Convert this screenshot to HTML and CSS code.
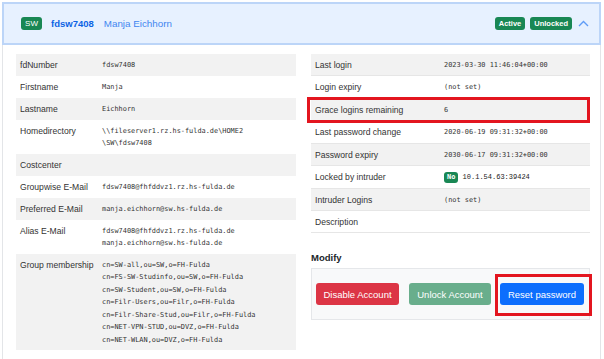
FILE: index.html
```html
<!DOCTYPE html>
<html lang="en">
<head>
    <meta charset="UTF-8">
    <title>Account fdsw7408</title>
    <link rel="stylesheet" href="styles.css">
</head>
<body>

    <div class="account">
        <!-- Accordion header -->
        <div class="account-head">
            <span class="badge badge-ou">SW</span>
            <span class="uid">fdsw7408</span>
            <span class="fullname">Manja Eichhorn</span>
            <span class="head-right">
                <span class="badge">Active</span>
                <span class="badge">Unlocked</span>
                <svg class="chevron" width="11" height="7" viewBox="0 0 11 7">
                    <path d="M1 6 L5.5 1.5 L10 6" fill="none" stroke="#5f9cf6" stroke-width="1.4"/>
                </svg>
            </span>
        </div>

        <!-- Accordion body -->
        <div class="account-body">
            <table class="info info-left">
                <tr><td class="key">fdNumber</td><td class="val">fdsw7408</td></tr>
                <tr><td class="key">Firstname</td><td class="val">Manja</td></tr>
                <tr><td class="key">Lastname</td><td class="val">Eichhorn</td></tr>
                <tr><td class="key">Homedirectory</td><td class="val">\\fileserver1.rz.hs-fulda.de\HOME2<br>\SW\fdsw7408</td></tr>
                <tr><td class="key">Costcenter</td><td class="val"></td></tr>
                <tr><td class="key">Groupwise E-Mail</td><td class="val">fdsw7408@fhfddvz1.rz.hs-fulda.de</td></tr>
                <tr><td class="key">Preferred E-Mail</td><td class="val">manja.eichhorn@sw.hs-fulda.de</td></tr>
                <tr><td class="key">Alias E-Mail</td><td class="val">fdsw7408@fhfddvz1.rz.hs-fulda.de<br>manja.eichhorn@sw.hs-fulda.de</td></tr>
                <tr><td class="key">Group membership</td><td class="val">cn=SW-all,ou=SW,o=FH-Fulda<br>cn=FS-SW-Studinfo,ou=SW,o=FH-Fulda<br>cn=SW-Student,ou=SW,o=FH-Fulda<br>cn=Filr-Users,ou=Filr,o=FH-Fulda<br>cn=Filr-Share-Stud,ou=Filr,o=FH-Fulda<br>cn=NET-VPN-STUD,ou=DVZ,o=FH-Fulda<br>cn=NET-WLAN,ou=DVZ,o=FH-Fulda</td></tr>
            </table>

            <div class="col-right">
                <table class="info info-right">
                    <tr><td class="key">Last login</td><td class="val">2023-03-30 11:46:04+00:00</td></tr>
                    <tr><td class="key">Login expiry</td><td class="val">(not set)</td></tr>
                    <tr><td class="key">Grace logins remaining</td><td class="val">6</td></tr>
                    <tr><td class="key">Last password change</td><td class="val">2020-06-19 09:31:32+00:00</td></tr>
                    <tr><td class="key">Password expiry</td><td class="val">2030-06-17 09:31:32+00:00</td></tr>
                    <tr><td class="key">Locked by intruder</td><td class="val"><span class="badge badge-sm">No</span> <span class="addr">10.1.54.63:39424</span></td></tr>
                    <tr><td class="key">Intruder Logins</td><td class="val">(not set)</td></tr>
                    <tr><td class="key">Description</td><td class="val"></td></tr>
                </table>

                <h3 class="modify-title">Modify</h3>
                <div class="modify">
                    <button class="btn btn-red">Disable Account</button>
                    <button class="btn btn-green">Unlock Account</button>
                    <button class="btn btn-blue">Reset password</button>
                </div>

                <!-- red annotation boxes -->
                <div class="mark mark-grace"></div>
                <div class="mark mark-reset"></div>
            </div>
        </div>
    </div>

</body>
</html>
```

FILE: styles.css
```css
/* General */
body {
    margin: 0;
    font-family: "Liberation Sans", Arial, sans-serif;
    color: #212529;
    background: #fff;
}

.account {
    margin: 2px 0 0 2px;
    width: 599px;
}

/* Header */
.account-head {
    display: flex;
    align-items: center;
    height: 43px;
    box-sizing: border-box;
    padding: 0 10px 0 17px;
    background: #e7f1ff;
    border: 2px solid #bcd5f8;
}

.badge {
    display: inline-block;
    background: #198754;
    color: #fff;
    font-size: 7.5px;
    font-weight: bold;
    height: 13px;
    line-height: 13px;
    padding: 0 4px;
    border-radius: 3px;
}

.badge-ou {
    width: 21px;
    box-sizing: border-box;
    text-align: center;
    font-weight: normal;
    font-size: 8px;
}

.uid {
    margin-left: 9px;
    font-size: 9.5px;
    font-weight: bold;
    color: #0c63e4;
}

.fullname {
    margin-left: 10px;
    font-size: 9.8px;
    color: #3f86f0;
}

.head-right {
    margin-left: auto;
    display: flex;
    align-items: center;
    gap: 5px;
}

.chevron {
    margin-left: 1px;
}

/* Body */
.account-body {
    display: grid;
    grid-template-columns: 280px 279px;
    column-gap: 15px;
    align-items: start;
    padding: 9px 0 20px 13px;
    border-left: 1px solid #e3e5e8;
    border-right: 1px solid #e3e5e8;
}

.info {
    width: 100%;
    border-collapse: collapse;
}

.info td {
    vertical-align: top;
    padding: 5px 4px 4.5px;
    line-height: 12.4px;
}

.info tr:nth-child(odd) td {
    background: #f2f2f2;
}

.key {
    font-size: 8.6px;
    color: #333;
}

.val {
    font-family: "DejaVu Sans Mono", "Liberation Mono", monospace;
    font-size: 6.9px;
    color: #333;
}

.info-left .key {
    width: 74px;
}

.info-right .key {
    width: 121px;
}

.info-right td {
    border-bottom: 1px solid #e6e6e6;
    padding-bottom: 4px;
}

.badge-sm {
    font-size: 7px;
    padding: 0 3px;
    height: 11px;
    line-height: 11px;
    vertical-align: middle;
}

.addr {
    font-family: "Liberation Mono", monospace;
    font-size: 7px;
    color: #222;
    vertical-align: middle;
}

/* Right column */
.col-right {
    position: relative;
}

.modify-title {
    margin: 19px 0 5px;
    font-size: 9.5px;
    font-weight: bold;
    color: #212529;
}

.modify {
    display: flex;
    gap: 10px;
    padding: 14px 5px 14px 5px;
    background: #f8f9fa;
    border: 1px solid #e5e7ea;
}

.btn {
    font-family: "Liberation Sans", Arial, sans-serif;
    font-size: 9.5px;
    color: #fff;
    height: 22px;
    padding: 0 6px;
    border: 0;
    border-radius: 3px;
}

.btn-red {
    width: 83px;
    margin-left: -1px;
    background: #dc3545;
}

.btn-green {
    width: 82px;
    background: #69ae8c;
}

.btn-blue {
    width: 84px;
    margin-left: -1px;
    background: #0d6efd;
}

/* Annotations */
.mark {
    position: absolute;
    border: 3px solid #e3151f;
    box-sizing: border-box;
}

.mark-grace {
    left: -4px;
    top: 43px;
    width: 283px;
    height: 26px;
}

.mark-reset {
    left: 184px;
    top: 220px;
    width: 97px;
    height: 42px;
}
```
